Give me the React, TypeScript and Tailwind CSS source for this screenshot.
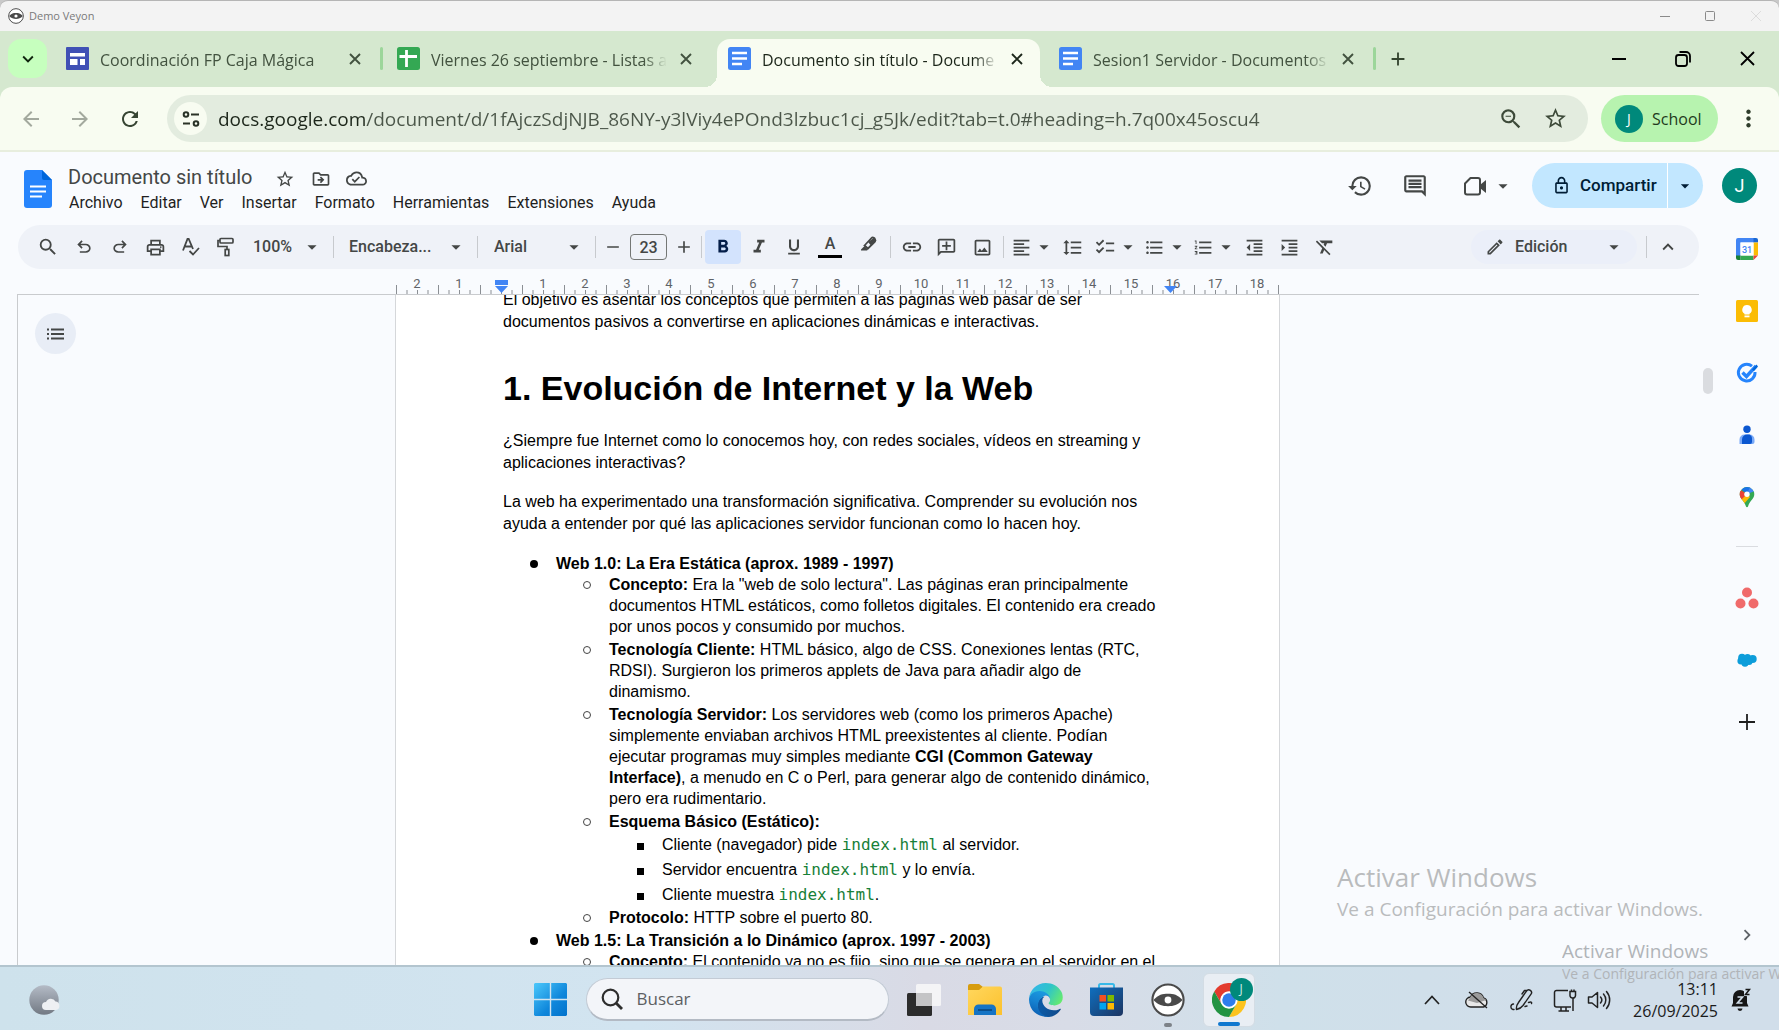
import React, { useState } from 'react'
import {
  MdAdd,
  MdArrowBack,
  MdArrowDropDown,
  MdArrowForward,
  MdChecklist,
  MdFormatAlignLeft,
  MdFormatBold,
  MdFormatClear,
  MdFormatIndentDecrease,
  MdFormatIndentIncrease,
  MdFormatItalic,
  MdFormatLineSpacing,
  MdFormatListBulleted,
  MdFormatListNumbered,
  MdFormatUnderlined,
  MdHistory,
  MdInsertLink,
  MdKeyboardArrowDown,
  MdKeyboardArrowRight,
  MdKeyboardArrowUp,
  MdMoreVert,
  MdOutlineAddComment,
  MdOutlineCloudDone,
  MdOutlineComment,
  MdOutlineDriveFileMove,
  MdOutlineEdit,
  MdOutlineImage,
  MdOutlineLock,
  MdOutlinePrint,
  MdRefresh,
  MdRemove,
  MdSearch,
  MdStarBorder,
  MdZoomOut,
} from 'react-icons/md'

/* ---------- drawings ---------- */

const VeyonEye = ({ className }: { className: string }) => (
  <svg viewBox="0 0 36 36" className={className} aria-hidden="true">
    <circle cx="18" cy="18" r="16.500" fill="#fff" stroke="#4a4a4a" strokeWidth="2.200" />
    <path d="M2.500 18C8 12.500 12 11.500 18 11.500S28 12.500 33.500 18C28 23.500 24 24.500 18 24.500S8 23.500 2.500 18z" fill="#4a4a4a" />
    <circle cx="18" cy="18" r="3.600" fill="#fff" />
  </svg>
)

const SitesIcon = () => (
  <svg viewBox="0 0 23 23" className="size-[23px]" aria-hidden="true">
    <rect width="23" height="23" rx="1" fill="#4050b5" />
    <rect x="4" y="6" width="15" height="3.500" fill="#fff" />
    <rect x="4" y="12" width="7.500" height="6" fill="#fff" />
    <rect x="14" y="12" width="5" height="6" fill="#fff" />
  </svg>
)

const SheetsIcon = () => (
  <svg viewBox="0 0 23 23" className="size-[23px]" aria-hidden="true">
    <rect width="23" height="23" rx="2.500" fill="#34a853" />
    <path d="M9.500 3v17M2.500 9.500h17.500" stroke="#fff" strokeWidth="2.800" />
  </svg>
)

const DocsTabIcon = () => (
  <svg viewBox="0 0 23 23" className="size-[23px]" aria-hidden="true">
    <rect width="23" height="23" rx="2.500" fill="#4285f4" />
    <path d="M4 6h15M4 11.500h15M4 17h10" stroke="#fff" strokeWidth="2.400" />
  </svg>
)

const DocsLogo = () => (
  <svg viewBox="0 0 28 38" className="h-[38px] w-7" aria-hidden="true">
    <path d="M3 0h15l10 10v25a3 3 0 0 1-3 3H3a3 3 0 0 1-3-3V3a3 3 0 0 1 3-3z" fill="#2684fc" />
    <path d="M18 0l10 10H20a2 2 0 0 1-2-2z" fill="#0066da" />
    <path d="M6 16.500h16M6 21.500h16M6 26.500h12" stroke="#fff" strokeWidth="2.200" />
  </svg>
)

const CloseIcon = () => (
  <svg viewBox="0 0 12 12" className="size-3" stroke="currentColor" strokeWidth="1.900" aria-hidden="true">
    <path d="M1 1l10 10M11 1L1 11" />
  </svg>
)

const SiteInfoIcon = () => (
  <svg viewBox="0 0 18 18" className="size-[18px]" fill="none" stroke="#2a3327" strokeWidth="2" aria-hidden="true">
    <circle cx="4" cy="4.500" r="2.300" />
    <path d="M9 4.500h8M1 13.500h7" />
    <circle cx="14" cy="13.500" r="2.300" />
  </svg>
)

const RestoreIcon = () => (
  <svg viewBox="0 0 16 16" className="size-4" fill="none" stroke="#000" strokeWidth="1.800" aria-hidden="true">
    <rect x="1" y="4" width="11" height="11" rx="2.500" />
    <path d="M4.500 1h6.500a4 4 0 0 1 4 4v6.500" />
  </svg>
)

const UndoIcon = () => (
  <svg viewBox="0 -960 960 960" className="size-5" fill="currentColor" aria-hidden="true">
    <path d="M280-200v-80h284q63 0 109.500-40T720-420q0-60-46.500-100T564-560H312l104 104-56 56-200-200 200-200 56 56-104 104h252q97 0 166.500 63T800-420q0 94-69.500 157T564-200H280Z" />
  </svg>
)

const RedoIcon = () => (
  <svg viewBox="0 -960 960 960" className="size-5" fill="currentColor" aria-hidden="true">
    <path d="M396-200q-97 0-166.500-63T160-420q0-94 69.500-157T396-640h252L544-744l56-56 200 200-200 200-56-56 104-104H396q-63 0-109.500 40T240-420q0 60 46.500 100T396-280h284v80H396Z" />
  </svg>
)

const SpellIcon = () => (
  <svg viewBox="0 0 20 20" className="size-5" fill="none" stroke="currentColor" strokeWidth="1.800" aria-hidden="true">
    <path d="M2 13.500L6.500 2h1.200L12 12M3.800 9.500h6.500M8.500 14l3.500 3.500L18 11" />
  </svg>
)

const PaintIcon = () => (
  <svg viewBox="0 0 20 20" className="size-5" fill="none" stroke="currentColor" strokeWidth="1.700" aria-hidden="true">
    <rect x="4" y="1.500" width="13" height="4.500" rx="1" />
    <path d="M4 3.500H2v6h9v3" />
    <rect x="9.200" y="12.500" width="3.600" height="6" />
  </svg>
)

const MarkerIcon = () => (
  <svg viewBox="0 0 20 20" className="size-5" aria-hidden="true">
    <path d="M3 14.500l3.500-3.500 3.500 3.500-1 1H3z" fill="currentColor" />
    <path d="M6.500 10.500L13.500 3a1.600 1.600 0 0 1 2.300 0l1.200 1.300a1.600 1.600 0 0 1 0 2.200L10 13.500z" fill="none" stroke="currentColor" strokeWidth="1.800" />
    <path d="M10 7l7-5 1 4-5 4.500z" fill="currentColor" />
  </svg>
)

const MeetIcon = () => (
  <svg viewBox="0 0 24 24" className="size-6" aria-hidden="true">
    <path d="M7.500 4H15a2 2 0 0 1 2 2v12.500a2 2 0 0 1-2 2H4a2 2 0 0 1-2-2V9.500z" fill="none" stroke="#444746" strokeWidth="2" strokeLinejoin="round" />
    <path d="M17.500 10.500L23 6v13l-5.500-4.500z" fill="#444746" />
  </svg>
)

const OutlineIcon = () => (
  <svg viewBox="0 0 18 14" width="18" height="14" fill="none" stroke="#444746" strokeWidth="2" aria-hidden="true">
    <path d="M0 2.500h2M4 2.500h13M0 7h2M4 7h13M0 11.500h2M4 11.500h13" />
  </svg>
)

const CalendarIcon = () => (
  <svg viewBox="0 0 22 22" className="size-[22px]" aria-hidden="true">
    <path d="M2 0h16v4.500H4.500V18H0V2a2 2 0 0 1 2-2z" fill="#4285f4" />
    <path d="M17.500 0H20a2 2 0 0 1 2 2v2.500h-4.500z" fill="#1967d2" />
    <path d="M17.500 4.500H22v13h-4.500z" fill="#fbbc04" />
    <path d="M4.500 17.500h13V22h-13z" fill="#34a853" />
    <path d="M0 17.500h4.500V22H2a2 2 0 0 1-2-2z" fill="#188038" />
    <path d="M17.500 17.500H22L17.500 22z" fill="#ea4335" />
    <path d="M4.500 4.500h13v13h-13z" fill="#fff" />
    <text x="11" y="14.500" textAnchor="middle" fontSize="9" fontWeight="500" fontFamily="Roboto, sans-serif" fill="#4285f4">31</text>
  </svg>
)

const KeepIcon = () => (
  <svg viewBox="0 0 22 22" className="size-[22px]" aria-hidden="true">
    <rect width="22" height="22" rx="1.500" fill="#fbbc04" />
    <path d="M11 5a4.700 4.700 0 0 1 2.500 8.700V14.500h-5V13.700A4.700 4.700 0 0 1 11 5z" fill="#fff" />
    <rect x="8.500" y="15.500" width="5" height="1.800" fill="#fff" />
  </svg>
)

const TasksIcon = () => (
  <svg viewBox="0 0 22 22" className="size-[22px]" aria-hidden="true">
    <path d="M16 4.200A8.300 8.300 0 1 0 19 10" fill="none" stroke="#2684fc" strokeWidth="3" />
    <path d="M6.500 10.500l4 4L20 4" fill="none" stroke="#2684fc" strokeWidth="3.400" />
    <path d="M16 7.500l4.500-5 1.500 2-4 4.500z" fill="#0066da" />
  </svg>
)

const ContactsIcon = () => (
  <svg viewBox="0 0 22 22" className="size-[22px]" aria-hidden="true">
    <circle cx="11" cy="5.300" r="3.700" fill="#0b57d0" />
    <path d="M3.500 20v-4.500a5 5 0 0 1 5-5h5a5 5 0 0 1 5 5V18a2 2 0 0 1-2 2z" fill="#7baaf7" />
    <path d="M6 20v-4.500a5 5 0 0 1 5-5h2.500a5 5 0 0 1 2.500 5V18a2 2 0 0 1-2 2z" fill="#0b57d0" />
  </svg>
)

const MapsIcon = () => (
  <svg viewBox="0 0 16 22" className="h-[22px] w-4" aria-hidden="true">
    <defs>
      <clipPath id="pin">
        <path d="M8 1a7.300 7.300 0 0 1 7.300 7.300c0 4.700-4.300 6-6.300 12.200-.3 1-1.700 1-2 0C5 14.300.7 13 .7 8.300A7.300 7.300 0 0 1 8 1z" />
      </clipPath>
    </defs>
    <g clipPath="url(#pin)">
      <rect width="16" height="22" fill="#34a853" />
      <path d="M0 13L8 8l3 3-7 8H0z" fill="#fbbc04" />
      <path d="M0 3l8 5-6 6H0z" fill="#ea4335" />
      <path d="M2 3l6 5 4-7-4-1z" fill="#1a73e8" />
      <path d="M8 8l3-7 5 4z" fill="#4285f4" />
    </g>
    <circle cx="8" cy="8.300" r="2.700" fill="#fff" />
  </svg>
)

const AsanaIcon = () => (
  <svg viewBox="0 0 24 22" className="h-[22px] w-6" fill="#f06a6a" aria-hidden="true">
    <circle cx="12" cy="5.500" r="5" />
    <circle cx="5.500" cy="16.500" r="5" />
    <circle cx="18.500" cy="16.500" r="5" />
  </svg>
)

const SalesforceIcon = () => (
  <svg viewBox="0 0 20 14" width="20" height="14" fill="#0d9dda" aria-hidden="true">
    <circle cx="5" cy="4.500" r="3.800" />
    <circle cx="10.500" cy="4.500" r="3.500" />
    <circle cx="15.700" cy="6" r="4" />
    <circle cx="3.800" cy="8" r="3.400" />
    <circle cx="8" cy="10" r="3.700" />
    <circle cx="12" cy="8.500" r="3.500" />
  </svg>
)

const WeatherIcon = () => (
  <svg viewBox="0 0 32 30" className="h-[30px] w-8" aria-hidden="true">
    <defs>
      <linearGradient id="moon" x1="0" y1="0" x2="0" y2="1">
        <stop offset="0" stopColor="#b4bbc6" />
        <stop offset="1" stopColor="#727983" />
      </linearGradient>
    </defs>
    <circle cx="15" cy="15" r="14.700" fill="url(#moon)" />
    <path d="M17 25a4 4 0 0 1 0-8 5.200 5.200 0 0 1 9.500-.5A4.300 4.300 0 0 1 27 25z" fill="#eef0f3" />
  </svg>
)

const StartIcon = () => (
  <svg viewBox="0 0 33 33" className="size-[33px]" aria-hidden="true">
    <defs>
      <linearGradient id="win" x1="0" y1="0" x2="1" y2="1">
        <stop offset="0" stopColor="#4cc8fb" />
        <stop offset="0.600" stopColor="#0f87db" />
        <stop offset="1" stopColor="#0272cb" />
      </linearGradient>
    </defs>
    <path d="M1 0h14.800v15.800H0V1zM17.200 0H32l1 1v14.800H17.200zM0 17.200h15.800V33H1l-1-1zM17.200 17.200H33V32l-1 1H17.200z" fill="url(#win)" />
  </svg>
)

const TaskViewIcon = () => (
  <svg viewBox="0 0 34 32" className="h-8 w-[34px]" aria-hidden="true">
    <rect x="0" y="9" width="25" height="23" rx="1.500" fill="#2c2c2c" />
    <rect x="9" y="0" width="25" height="22" rx="1.500" fill="#f4f4f6" />
    <rect x="9" y="9" width="16" height="13" fill="#c4c4c6" />
  </svg>
)

const FolderIcon = () => (
  <svg viewBox="0 0 34 31" className="h-[31px] w-[34px]" aria-hidden="true">
    <defs>
      <linearGradient id="fold" x1="0" y1="0" x2="1" y2="1">
        <stop offset="0" stopColor="#ffd75e" />
        <stop offset="1" stopColor="#fcc12d" />
      </linearGradient>
    </defs>
    <path d="M0 2a2 2 0 0 1 2-2h9l4 3-3 4H0z" fill="#d79c0e" />
    <path d="M0 6h11l4-3.500h17a2 2 0 0 1 2 2V31H0z" fill="url(#fold)" />
    <path d="M6 31v-6a4.500 4.500 0 0 1 4.500-4.500h13A4.500 4.500 0 0 1 28 25v6z" fill="#1674c4" />
    <path d="M10 26h14" stroke="#0b4f8c" strokeWidth="2" />
  </svg>
)

const EdgeIcon = () => (
  <svg viewBox="0 0 258 258" className="size-[34px]" aria-hidden="true">
    <defs>
      <linearGradient id="e1" x1="0.200" y1="0.500" x2="1" y2="0.700">
        <stop offset="0" stopColor="#0c59a4" />
        <stop offset="1" stopColor="#114a8b" />
      </linearGradient>
      <linearGradient id="e2" x1="0.600" y1="0" x2="0.300" y2="1">
        <stop offset="0" stopColor="#1b9de2" />
        <stop offset="0.500" stopColor="#1581d0" />
        <stop offset="1" stopColor="#0a5cb0" />
      </linearGradient>
      <linearGradient id="e3" x1="0" y1="0.300" x2="1" y2="0.700">
        <stop offset="0" stopColor="#35b6ea" />
        <stop offset="0.500" stopColor="#2fc4c9" />
        <stop offset="1" stopColor="#66eb6e" />
      </linearGradient>
    </defs>
    <path d="M235.680 195.460a93.730 93.730 0 0 1-10.540 4.710 101.870 101.870 0 0 1-35.900 6.460c-47.320 0-88.540-32.550-88.540-74.320A31.480 31.480 0 0 1 117.130 104.400c-42.800 1.800-53.800 46.400-53.800 72.530 0 73.880 68.090 81.370 82.760 81.370 7.910 0 19.840-2.300 27-4.560l1.310-.44a128.340 128.340 0 0 0 66.600-52.800 4 4 0 0 0-5.320-5.040z" fill="url(#e1)" />
    <path d="M105.730 241.420A79.200 79.200 0 0 1 83 220.080a80.720 80.720 0 0 1 29.520-120.370c3.120-1.470 8.450-4.130 15.540-4a32.350 32.350 0 0 1 25.690 13 31.880 31.880 0 0 1 6.360 18.660c0-.21 24.460-79.600-80-79.600-43.900 0-80 41.660-80 78.210a130.150 130.150 0 0 0 12.110 56 128 128 0 0 0 156.380 67.110 75.550 75.550 0 0 1-62.780-8z" fill="url(#e2)" />
    <path d="M152.330 148.860c-.81 1.050-3.300 2.500-3.300 5.660 0 2.610 1.700 5.120 4.720 7.230 14.380 10 41.490 8.680 41.560 8.680a59.560 59.560 0 0 0 30.270-8.350 61.380 61.380 0 0 0 30.430-52.880c.26-22.410-8-37.310-11.340-43.910C223.460 23.780 177.720 0 128 0A128 128 0 0 0 0 126.200c.48-36.540 36.800-66.050 80-66.050 3.500 0 23.460.34 42 10.070 16.340 8.580 24.900 18.940 30.850 29.210 6.180 10.670 7.280 24.150 7.280 29.520s-2.740 13.330-7.800 19.910z" fill="url(#e3)" />
  </svg>
)

const StoreIcon = () => (
  <svg viewBox="0 0 33 33" className="size-[33px]" aria-hidden="true">
    <defs>
      <linearGradient id="store" x1="0" y1="0" x2="1" y2="1">
        <stop offset="0" stopColor="#0f6fbf" />
        <stop offset="1" stopColor="#1d3561" />
      </linearGradient>
    </defs>
    <path d="M9 6V2.500A1.500 1.500 0 0 1 10.500 1h12A1.500 1.500 0 0 1 24 2.500V6" fill="none" stroke="#38b9e8" strokeWidth="2" />
    <path d="M0 4.500h33V29a4 4 0 0 1-4 4H4a4 4 0 0 1-4-4z" fill="url(#store)" />
    <path d="M9.500 12h6.500v6.500H9.500z" fill="#f25022" />
    <path d="M17.500 12H24v6.500h-6.500z" fill="#7fba00" />
    <path d="M9.500 20h6.500v6.500H9.500z" fill="#00a4ef" />
    <path d="M17.500 20H24v6.500h-6.500z" fill="#ffb900" />
  </svg>
)

const ChromeIcon = () => (
  <svg viewBox="0 0 48 48" className="size-[34px]" aria-hidden="true">
    <path d="M24 12H44.800A24 24 0 0 0 3.200 12L13.600 30A12 12 0 0 1 24 12Z" fill="#e33b2e" />
    <path d="M24 12h20.800A24 24 0 0 1 24 48L34.400 30A12 12 0 0 0 24 12Z" fill="#fcc31e" />
    <path d="M13.600 30L3.200 12A24 24 0 0 0 24 48L34.400 30A12 12 0 0 1 13.600 30Z" fill="#229342" />
    <circle cx="24" cy="24" r="12" fill="#fff" />
    <circle cx="24" cy="24" r="9.500" fill="#2f7ded" />
  </svg>
)

const CloudOffIcon = () => (
  <svg viewBox="0 0 24 18" className="h-[18px] w-6" aria-hidden="true">
    <path d="M6 16a5 5 0 0 1-.5-10A7 7 0 0 1 18.500 7 4.700 4.700 0 0 1 18.500 16z" fill="#e8e8e8" stroke="#222" strokeWidth="1.400" />
    <path d="M3 9.500L5.500 6A7 7 0 0 1 18.500 7l3 2L12 12z" fill="#9b9b9b" />
    <path d="M4 1l18 16" stroke="#222" strokeWidth="1.400" />
  </svg>
)

const PenIcon = () => (
  <svg viewBox="0 0 24 24" className="size-6" fill="none" stroke="#222" strokeWidth="1.400" strokeLinecap="round" strokeLinejoin="round" aria-hidden="true">
    <path d="M7.500 21.500c-.5-3 .5-5 2-7L17.500 3a2.700 2.700 0 0 1 4.500 3.200L14 17.500c-1.500 2-3.500 3.500-6.500 4z" />
    <path d="M13 6l2.500-3.500h2M4.500 16a2.800 2.800 0 0 0-.5 5.500h1M16 18.500l2-.5M19.500 14.500c2.500-1 3.500-.5 3 1" />
  </svg>
)

const NetworkIcon = () => (
  <svg viewBox="0 0 24 24" className="size-6" fill="none" stroke="#222" strokeWidth="1.500" aria-hidden="true">
    <path d="M15 2.500H3.500a2 2 0 0 0-2 2V17a2 2 0 0 0 2 2H18M8 19v3.500M13 19v3.500M5.500 23H16" />
    <path d="M17 3.500h5.500v4a2.500 2.500 0 0 1-2.700 2.500 2.500 2.500 0 0 1-2.800-2.500zM18.500 3.500V1.500M21 3.500V1.500M20 10v13" />
  </svg>
)

const SpeakerIcon = () => (
  <svg viewBox="0 0 24 24" className="size-6" fill="none" stroke="#222" strokeWidth="1.500" strokeLinejoin="round" strokeLinecap="round" aria-hidden="true">
    <path d="M1.500 9H5l5.500-4.500v15L5 15H1.500z" />
    <path d="M13.500 9a4.500 4.500 0 0 1 0 6M16.500 6a9 9 0 0 1 0 12M19.500 3.500a13 13 0 0 1 0 17" />
  </svg>
)

const BellIcon = () => (
  <svg viewBox="0 0 20 24" className="h-6 w-5" aria-hidden="true">
    <path d="M9 2a7 7 0 0 0-7 7v6L.5 18.500h17L16 15V9a7 7 0 0 0-7-7z" fill="#161616" />
    <path d="M6.500 20.500h5a2.500 2.500 0 0 1-5 0z" fill="#161616" />
    <path d="M13 0h7v8h-7z" fill="#d1deea" />
    <path d="M14.500 1.500h4l-4 5h4" fill="none" stroke="#161616" strokeWidth="1.500" />
    <path d="M6.500 9h5l-5 6h5" fill="none" stroke="#d1deea" strokeWidth="1.700" />
  </svg>
)

/* ---------- browser chrome ---------- */

function TitleBar() {
  return (
    <div className="flex h-[31px] shrink-0 items-center rounded-t-lg border-t border-[#b5b5b5] bg-[#f3f3f3] pl-2">
      <VeyonEye className="size-4" />
      <span className="ml-[5px] grow text-[11px] leading-4 text-[#7a7a7a]">Demo Veyon</span>
      <button aria-label="Minimizar" className="flex w-[45px] justify-center">
        <svg viewBox="0 0 10 10" className="size-2.5" stroke="#8a8a8a" aria-hidden="true"><path d="M0 5.500h10" /></svg>
      </button>
      <button aria-label="Maximizar" className="flex w-[45px] justify-center">
        <svg viewBox="0 0 10 10" className="size-2.5" fill="none" stroke="#8a8a8a" aria-hidden="true"><rect x="0.500" y="0.500" width="9" height="9" rx="1" /></svg>
      </button>
      <button aria-label="Cerrar" className="flex w-[47px] justify-center">
        <svg viewBox="0 0 10 10" className="size-2.5" stroke="#dcdcdc" aria-hidden="true"><path d="M0 0l10 10M10 0L0 10" /></svg>
      </button>
    </div>
  )
}

const TABS = [
  { title: 'Coordinación FP Caja Mágica', icon: <SitesIcon /> },
  { title: 'Viernes 26 septiembre - Listas a', icon: <SheetsIcon /> },
  { title: 'Documento sin título - Docume', icon: <DocsTabIcon />, active: true },
  { title: 'Sesion1 Servidor - Documentos', icon: <DocsTabIcon /> },
]

function TabStrip() {
  return (
    <div className="flex h-14 shrink-0 bg-[#d5e8cf] pt-2">
      <button aria-label="Buscar pestañas" className="ml-2 flex size-[39px] shrink-0 items-center justify-center rounded-[13px] bg-[#c6ffbe]">
        <MdKeyboardArrowDown className="size-[22px] text-[#10250f]" />
      </button>
      <div className="ml-2 flex min-w-0">
        {TABS.map((t, i) => {
          const next = TABS[i + 1]
          const divider = !t.active && !next?.active
          return (
            <React.Fragment key={t.title}>
              <div
                className={
                  t.active
                    ? 'relative flex h-12 w-[323px] min-w-0 items-start rounded-t-[13px] bg-[#f8fcf1] pt-2 pl-[11px] text-[#1c261a]'
                    : 'flex h-12 w-[323px] min-w-0 items-start pt-2 pl-[11px] text-[#42523f]'
                }
              >
                {t.active && (
                  <>
                    <span className="absolute bottom-0 -left-3 size-3 bg-[radial-gradient(circle_at_0_0,transparent_12px,#f8fcf1_12px)]" />
                    <span className="absolute -right-3 bottom-0 size-3 bg-[radial-gradient(circle_at_100%_0,transparent_12px,#f8fcf1_12px)]" />
                  </>
                )}
                <span className="shrink-0">{t.icon}</span>
                <span className="ml-[11px] w-[236px] overflow-hidden text-base leading-[27px] whitespace-nowrap [mask-image:linear-gradient(90deg,#000_90%,transparent)]">
                  {t.title}
                </span>
                <button aria-label={'Cerrar ' + t.title} className="ml-[7px] flex h-[23px] w-6 shrink-0 items-center justify-center">
                  <CloseIcon />
                </button>
              </div>
              <span className={divider ? 'mt-2 mr-[3px] ml-[2px] h-[23px] w-[3px] shrink-0 rounded-full bg-[#9cd69a]' : 'w-2 shrink-0'} />
            </React.Fragment>
          )
        })}
        <button aria-label="Nueva pestaña" className="ml-[7px] flex h-[39px] w-6 shrink-0 items-center justify-center">
          <MdAdd className="size-[22px] text-[#33442f]" />
        </button>
      </div>
      <div className="ml-auto flex h-[39px] items-center">
        <button aria-label="Minimizar ventana" className="flex w-16 justify-center">
          <span className="h-[2px] w-3.5 bg-black" />
        </button>
        <button aria-label="Restaurar ventana" className="flex w-16 justify-center"><RestoreIcon /></button>
        <button aria-label="Cerrar ventana" className="flex w-16 justify-center">
          <svg viewBox="0 0 15 15" className="size-[15px]" stroke="#000" strokeWidth="1.800" aria-hidden="true"><path d="M1 1l13 13M14 1L1 14" /></svg>
        </button>
      </div>
    </div>
  )
}

function AddressBar() {
  return (
    <div className="shrink-0 bg-[#d5e8cf]">
      <div className="flex h-[65px] items-center rounded-t-xl border-b-2 border-[#e8eede] bg-[#f8fcf1] pl-[6px]">
        <button aria-label="Atrás" className="flex w-[49px] justify-center"><MdArrowBack className="size-6 text-[#a3a99e]" /></button>
        <button aria-label="Adelante" className="flex w-[50px] justify-center"><MdArrowForward className="size-6 text-[#a3a99e]" /></button>
        <button aria-label="Volver a cargar" className="flex w-[50px] justify-center"><MdRefresh className="size-6 text-[#374533]" /></button>
        <div className="ml-3 flex h-[47px] grow items-center rounded-full bg-[#e3ecdf] pr-[21px] pl-[7px]">
          <button aria-label="Información del sitio" className="flex size-[33px] shrink-0 items-center justify-center rounded-full bg-[#f8fcf1]">
            <SiteInfoIcon />
          </button>
          <input
            aria-label="Barra de direcciones"
            defaultValue="docs.google.com/document/d/1fAjczSdjNJB_86NY-y3lViy4ePOnd3lzbuc1cj_g5Jk/edit?tab=t.0#heading=h.7q00x45oscu4"
            className="ml-[11px] min-w-0 grow bg-[linear-gradient(90deg,#1c261a_148px,#4b5649_148px)] bg-clip-text text-[19px] leading-7 text-transparent outline-none"
          />
          <button aria-label="Zoom" className="flex w-[45px] justify-center"><MdZoomOut className="size-[26px] text-[#3d4a39]" /></button>
          <button aria-label="Añadir a marcadores" className="ml-2.5 flex w-6 justify-center"><MdStarBorder className="size-[25px] shrink-0 text-[#3d4a39]" /></button>
        </div>
        <button className="ml-[13px] flex h-[47px] w-[117px] items-center rounded-full bg-[#b7f3af] pl-3.5 text-base text-[#1f3a1c]">
          <span className="flex size-7 items-center justify-center rounded-full bg-[#00897b] text-sm text-white">J</span>
          <span className="ml-[9px]">School</span>
        </button>
        <button aria-label="Más opciones" className="mr-[17px] ml-[17px] flex w-[27px] justify-center"><MdMoreVert className="size-[27px] shrink-0 text-[#2f3d2b]" /></button>
      </div>
    </div>
  )
}

/* ---------- Docs header and toolbar ---------- */

const MENUS = ['Archivo', 'Editar', 'Ver', 'Insertar', 'Formato', 'Herramientas', 'Extensiones', 'Ayuda']

function DocsHeader() {
  return (
    <header className="flex h-[73px] shrink-0 items-start pr-[22px] pl-6 font-['Roboto',sans-serif]">
      <a href="#inicio" aria-label="Página principal de Documentos" className="mt-[18px] shrink-0"><DocsLogo /></a>
      <div className="mt-3 ml-2">
        <div className="flex h-[26px] items-center text-[#444746]">
          <input aria-label="Título del documento" defaultValue="Documento sin título" className="ml-2 w-[205px] bg-transparent text-xl leading-[26px] text-[#444746] outline-none" />
          <button aria-label="Destacar" className="mt-[3px] flex w-6 justify-center"><MdStarBorder className="size-5" /></button>
          <button aria-label="Mover" className="mt-[3px] ml-3 flex w-6 justify-center"><MdOutlineDriveFileMove className="size-5" /></button>
          <button aria-label="Estado del documento" className="mt-[3px] ml-[11px] flex w-6 justify-center"><MdOutlineCloudDone className="size-[21px]" /></button>
        </div>
        <nav className="flex h-[26px] items-center gap-[18px] pl-[9px] text-base text-[#1f1f1f]">
          {MENUS.map((m) => (
            <button key={m}>{m}</button>
          ))}
        </nav>
      </div>
      <div className="mt-[11px] ml-auto flex h-[45px] items-center text-[#444746]">
        <button aria-label="Historial de versiones"><MdHistory className="size-[26px]" /></button>
        <button aria-label="Comentarios" className="ml-[29px]"><MdOutlineComment className="size-[26px]" /></button>
        <button aria-label="Videollamada" className="ml-[35px] flex items-center">
          <MeetIcon />
          <MdArrowDropDown className="ml-[5px] size-[22px]" />
        </button>
        <div className="ml-[18px] flex h-[45px] overflow-hidden rounded-full bg-[#c2e7ff] text-[#001d35]">
          <button className="flex w-[135px] items-center pl-5 text-[17px] font-medium">
            <MdOutlineLock className="size-[19px]" />
            <span className="ml-[9px]">Compartir</span>
          </button>
          <button aria-label="Opciones de compartir" className="flex w-9 items-center justify-center border-l border-white pr-0.5"><MdArrowDropDown className="size-5" /></button>
        </div>
        <button aria-label="Cuenta" className="ml-[19px] flex size-[35px] items-center justify-center rounded-full bg-[#00897b] text-lg text-white">J</button>
      </div>
    </header>
  )
}

const Sep = () => <span className="mx-[3px] h-[22px] w-px shrink-0 bg-[#c7cace]" />

function Cell({ label, wide, children }: { label: string; wide?: boolean; children: React.ReactNode }) {
  return (
    <button aria-label={label} className={wide ? 'flex h-[34px] w-9 shrink-0 items-center justify-center' : 'flex h-[34px] w-[35px] shrink-0 items-center justify-center'}>
      {children}
    </button>
  )
}

function SplitCell({ label, children }: { label: string; children: React.ReactNode }) {
  return (
    <button aria-label={label} className="flex h-[34px] w-[49px] shrink-0 items-center">
      <span className="flex w-9 justify-center">{children}</span>
      <MdArrowDropDown className="-ml-[3px] size-[22px] shrink-0" />
    </button>
  )
}

function Dropdown({ label, value, box, pad }: { label: string; value: string; box: string; pad: string }) {
  return (
    <label className={'relative flex h-[34px] shrink-0 items-center ' + box}>
      <span className="sr-only">{label}</span>
      <select className={'w-full appearance-none bg-transparent text-base leading-6 font-medium text-[#444746] outline-none ' + pad}>
        <option>{value}</option>
      </select>
      <MdArrowDropDown className="pointer-events-none absolute right-[7px] size-[22px]" />
    </label>
  )
}

function Toolbar() {
  const [size, setSize] = useState('23')
  return (
    <div className="mr-4 flex h-11 shrink-0 items-center overflow-hidden rounded-full bg-[#eff2f8] pr-[19px] pl-3 font-['Roboto',sans-serif] text-[#444746]">
      <Cell wide label="Buscar en los menús"><MdSearch className="size-[22px]" /></Cell>
      <Cell wide label="Deshacer"><UndoIcon /></Cell>
      <Cell wide label="Rehacer"><RedoIcon /></Cell>
      <Cell label="Imprimir"><MdOutlinePrint className="size-[21px]" /></Cell>
      <Cell label="Revisión ortográfica"><SpellIcon /></Cell>
      <Cell label="Copiar formato"><PaintIcon /></Cell>
      <Dropdown label="Zoom" value="100%" box="w-[87px]" pad="pl-[10px]" />
      <Sep />
      <Dropdown label="Estilos" value="Encabeza..." box="w-[137px]" pad="pl-3" />
      <Sep />
      <Dropdown label="Fuente" value="Arial" box="w-[111px]" pad="pl-[13px]" />
      <Sep />
      <button aria-label="Reducir tamaño" className="flex w-7 shrink-0 justify-center"><MdRemove className="size-5" /></button>
      <input aria-label="Tamaño de fuente" value={size} onChange={(e) => setSize(e.target.value)} className="mx-[3px] h-[26px] w-[37px] shrink-0 rounded border border-[#747775] text-center text-base font-medium outline-none" />
      <button aria-label="Aumentar tamaño" className="flex w-7 shrink-0 justify-center"><MdAdd className="size-5" /></button>
      <Sep />
      <button aria-label="Negrita" aria-pressed="true" className="flex h-[34px] w-9 shrink-0 items-center justify-center rounded bg-[#d3e3fd] text-[#041e49]"><MdFormatBold className="size-[22px]" /></button>
      <Cell label="Cursiva"><MdFormatItalic className="size-[22px]" /></Cell>
      <Cell wide label="Subrayado"><MdFormatUnderlined className="size-5" /></Cell>
      <button aria-label="Color del texto" className="flex h-[34px] w-9 shrink-0 flex-col items-center text-base leading-5 font-medium">
        <span className="mt-1">A</span>
        <span className="mt-px h-[3px] w-6 bg-black" />
      </button>
      <button aria-label="Color de resaltado" className="flex w-[39px] shrink-0 justify-center pb-1"><MarkerIcon /></button>
      <Sep />
      <Cell label="Insertar enlace"><MdInsertLink className="size-[22px]" /></Cell>
      <Cell label="Añadir comentario"><MdOutlineAddComment className="size-[21px] -scale-x-100" /></Cell>
      <Cell wide label="Insertar imagen"><MdOutlineImage className="size-[21px]" /></Cell>
      <Sep />
      <button aria-label="Alinear" className="flex h-[34px] w-12 shrink-0 items-center">
        <span className="flex w-8 justify-center"><MdFormatAlignLeft className="size-[21px]" /></span>
        <MdArrowDropDown className="-ml-[3px] size-[22px] shrink-0" />
      </button>
      <Cell label="Interlineado"><MdFormatLineSpacing className="size-[21px]" /></Cell>
      <SplitCell label="Lista de comprobación"><MdChecklist className="size-[22px]" /></SplitCell>
      <SplitCell label="Lista con viñetas"><MdFormatListBulleted className="size-[21px]" /></SplitCell>
      <SplitCell label="Lista numerada"><MdFormatListNumbered className="size-[21px]" /></SplitCell>
      <Cell label="Reducir sangría"><MdFormatIndentDecrease className="size-[21px]" /></Cell>
      <Cell label="Aumentar sangría"><MdFormatIndentIncrease className="size-[21px]" /></Cell>
      <Cell label="Borrar formato"><MdFormatClear className="size-[22px]" /></Cell>
      <label className="relative ml-auto flex h-[34px] w-[166px] shrink-0 items-center rounded-full bg-[#ebeff9]">
        <span className="sr-only">Modo</span>
        <MdOutlineEdit className="pointer-events-none absolute left-3.5 size-5" />
        <select className="w-full appearance-none bg-transparent pl-11 text-base leading-6 font-medium text-[#444746] outline-none">
          <option>Edición</option>
        </select>
        <MdArrowDropDown className="pointer-events-none absolute right-3 size-[22px]" />
      </label>
      <span className="mx-[9px] h-[22px] w-px shrink-0 bg-[#c7cace]" />
      <button aria-label="Ocultar los menús" className="flex w-6 shrink-0 justify-center"><MdKeyboardArrowUp className="size-[22px]" /></button>
    </div>
  )
}

/* ---------- ruler and page ---------- */

function Ruler() {
  const quarters = Array.from({ length: 85 }, (_, i) => i)
  const labels = [-2, -1, ...Array.from({ length: 18 }, (_, i) => i + 1)]
  return (
    <svg viewBox="0 0 884 25" width="884" height="25" className="shrink-0" aria-hidden="true">
      {quarters.map((i) => (
        <path key={i} d={'M' + (0.5 + i * 10.5) + ' ' + (i % 4 === 0 ? 16 : 21) + 'V25'} stroke="#8b8f94" />
      ))}
      {labels.map((n) => (
        <text key={n} x={105 + n * 42} y="19" textAnchor="middle" fontSize="13" fontFamily="Roboto, sans-serif" fill="#5f6368">
          {Math.abs(n)}
        </text>
      ))}
      <path d="M99 11h13v5H99zM99 17h13l-6.500 7z" fill="#4285f4" />
      <path d="M768 17h13l-6.500 7z" fill="#4285f4" />
    </svg>
  )
}

function Item({ marker, children, sub, tall }: { marker: string; children: React.ReactNode; sub?: React.ReactNode; tall?: boolean }) {
  return (
    <li>
      <div className={tall ? 'flex leading-[25px]' : sub ? 'flex leading-[21px]' : 'flex pb-0.5 leading-[21px]'}>
        {marker === 'disc' && <span className="mt-[7px] mr-[18px] ml-[27px] size-2 shrink-0 rounded-full bg-black" />}
        {marker === 'ring' && <span className="mt-[7px] mr-[18px] ml-[27px] size-2 shrink-0 rounded-full border border-[#444]" />}
        {marker === 'square' && <span className="mt-[11px] mr-[18px] ml-[28px] size-[7px] shrink-0 bg-black" />}
        <div className="whitespace-nowrap">{children}</div>
      </div>
      {sub && <ul className="pl-[53px]">{sub}</ul>}
    </li>
  )
}

const Code = ({ children }: { children: React.ReactNode }) => (
  <code className="font-['DejaVu_Sans_Mono',monospace] leading-none text-[#188038]">{children}</code>
)

function Page() {
  return (
    <article className="w-[885px] shrink-0 overflow-hidden border-x border-[#d5d7da] bg-white pl-[107px] font-['Liberation_Sans',Arial,sans-serif] text-base text-black">
      <p className="-mt-1.5 leading-[22px]">
        El objetivo es asentar los conceptos que permiten a las páginas web pasar de ser<br />
        documentos pasivos a convertirse en aplicaciones dinámicas e interactivas.
      </p>
      <h1 className="mt-[35px] text-[34px] leading-10 font-bold">1. Evolución de Internet y la Web</h1>
      <p className="mt-[22px] leading-[22px]">
        ¿Siempre fue Internet como lo conocemos hoy, con redes sociales, vídeos en streaming y<br />
        aplicaciones interactivas?
      </p>
      <p className="mt-[17px] leading-[22px]">
        La web ha experimentado una transformación significativa. Comprender su evolución nos<br />
        ayuda a entender por qué las aplicaciones servidor funcionan como lo hacen hoy.
      </p>
      <ul className="mt-[18px]">
        <Item
          marker="disc"
          sub={
            <>
              <Item marker="ring">
                <b>Concepto:</b> Era la "web de solo lectura". Las páginas eran principalmente<br />
                documentos HTML estáticos, como folletos digitales. El contenido era creado<br />
                por unos pocos y consumido por muchos.
              </Item>
              <Item marker="ring">
                <b>Tecnología Cliente:</b> HTML básico, algo de CSS. Conexiones lentas (RTC,<br />
                RDSI). Surgieron los primeros applets de Java para añadir algo de<br />
                dinamismo.
              </Item>
              <Item marker="ring">
                <b>Tecnología Servidor:</b> Los servidores web (como los primeros Apache)<br />
                simplemente enviaban archivos HTML preexistentes al cliente. Podían<br />
                ejecutar programas muy simples mediante <b>CGI (Common Gateway<br />
                Interface)</b>, a menudo en C o Perl, para generar algo de contenido dinámico,<br />
                pero era rudimentario.
              </Item>
              <Item
                marker="ring"
                sub={
                  <>
                    <Item tall marker="square">Cliente (navegador) pide <Code>index.html</Code> al servidor.</Item>
                    <Item tall marker="square">Servidor encuentra <Code>index.html</Code> y lo envía.</Item>
                    <Item tall marker="square">Cliente muestra <Code>index.html</Code>.</Item>
                  </>
                }
              >
                <b>Esquema Básico (Estático):</b>
              </Item>
              <Item marker="ring"><b>Protocolo:</b> HTTP sobre el puerto 80.</Item>
            </>
          }
        >
          <b>Web 1.0: La Era Estática (aprox. 1989 - 1997)</b>
        </Item>
        <Item
          marker="disc"
          sub={
            <Item marker="ring">
              <b>Concepto:</b> El contenido ya no es fijo, sino que se genera en el servidor en el
            </Item>
          }
        >
          <b>Web 1.5: La Transición a lo Dinámico (aprox. 1997 - 2003)</b>
        </Item>
      </ul>
    </article>
  )
}

function SidePanel() {
  return (
    <aside className="flex w-16 shrink-0 flex-col items-center pt-[13px]">
      <div className="flex flex-col items-center gap-10">
        <button aria-label="Calendar"><CalendarIcon /></button>
        <button aria-label="Keep"><KeepIcon /></button>
        <button aria-label="Tasks"><TasksIcon /></button>
        <button aria-label="Contactos"><ContactsIcon /></button>
        <button aria-label="Maps"><MapsIcon /></button>
      </div>
      <span className="mt-[38px] h-px w-[22px] bg-[#dadce0]" />
      <div className="mt-10 flex flex-col items-center">
        <button aria-label="Asana" className="flex h-[22px] items-center"><AsanaIcon /></button>
        <button aria-label="Salesforce" className="mt-10 flex h-[22px] items-center"><SalesforceIcon /></button>
        <button aria-label="Obtener complementos" className="mt-10 flex h-[22px] items-center">
          <svg viewBox="0 0 16 16" className="size-4" stroke="#1f1f1f" strokeWidth="1.800" aria-hidden="true"><path d="M8 0v16M0 8h16" /></svg>
        </button>
      </div>
      <button aria-label="Ocultar panel lateral" className="mt-auto mb-[19px]"><MdKeyboardArrowRight className="size-[22px] text-[#5f6368]" /></button>
    </aside>
  )
}

/* ---------- taskbar ---------- */

function Taskbar() {
  const app = 'flex h-[54px] w-[52px] shrink-0 items-center justify-center'
  return (
    <footer className="grid h-[65px] shrink-0 grid-cols-[1fr_auto_1fr] items-center border-t-2 border-[#b3c5cf] bg-[linear-gradient(90deg,#cee2ec_0%,#d2e4f0_36%,#d9dae5_52%,#d8dce7_60%,#cfe0ea_72%,#d1deea_88%,#d1deea_100%)] pt-0.5">
      <button aria-label="Tiempo" className="ml-[29px] w-8"><WeatherIcon /></button>
      <div className="flex items-center gap-[9px]">
        <button aria-label="Inicio" className={app}><StartIcon /></button>
        <label className="flex h-[43px] w-[303px] items-center rounded-full border border-b-2 border-[#c3cbd5] border-b-[#b3bac4] bg-[#f3f5f9] pl-3.5">
          <svg viewBox="0 0 22 22" className="size-[22px] shrink-0" fill="none" aria-hidden="true">
            <circle cx="9.500" cy="9.500" r="7.800" stroke="#2d2d2d" strokeWidth="2.200" />
            <path d="M15 15l6 6" stroke="#2d2d2d" strokeWidth="2.800" />
          </svg>
          <input aria-label="Buscar" placeholder="Buscar" className="ml-[14px] w-full min-w-0 bg-transparent pr-4 text-[17px] placeholder:text-[#5c5f63] outline-none" />
        </label>
        <button aria-label="Vista de tareas" className={app}><TaskViewIcon /></button>
        <button aria-label="Explorador de archivos" className={app}><FolderIcon /></button>
        <button aria-label="Edge" className={app}><EdgeIcon /></button>
        <button aria-label="Microsoft Store" className={app}><StoreIcon /></button>
        <button aria-label="Veyon" className={'relative ' + app}>
          <VeyonEye className="size-[34px]" />
          <span className="absolute bottom-0 h-1 w-2 rounded-full bg-[#7d8288]" />
        </button>
        <button aria-label="Chrome" className={'relative rounded-md border border-[#d3dce4] bg-[#e9eef4] ' + app}>
          <ChromeIcon />
          <span className="absolute top-1 right-px flex size-[23px] items-center justify-center rounded-full bg-[#00897b] text-xs text-[#cfeae6]">J</span>
          <span className="absolute bottom-0 h-1 w-[22px] rounded-full bg-[#0f78cf]" />
        </button>
      </div>
      <div className="flex items-center justify-end pr-[28px] text-[#1b1b1b]">
        <button aria-label="Mostrar iconos ocultos" className="mr-[25px]">
          <svg viewBox="0 0 16 10" className="h-2.5 w-4" fill="none" stroke="#222" strokeWidth="1.700" aria-hidden="true"><path d="M1 9l7-7.500L15 9" /></svg>
        </button>
        <button aria-label="OneDrive" className="mr-5"><CloudOffIcon /></button>
        <button aria-label="Lápiz" className="mr-5"><PenIcon /></button>
        <button aria-label="Red" className="mr-[10px]"><NetworkIcon /></button>
        <button aria-label="Volumen" className="mr-[22px]"><SpeakerIcon /></button>
        <button className="mr-[13px] flex flex-col items-end text-base leading-[22px]">
          <span>13:11</span>
          <span>26/09/2025</span>
        </button>
        <button aria-label="Notificaciones"><BellIcon /></button>
      </div>
    </footer>
  )
}

export default function App() {
  return (
    <div className="relative flex h-screen flex-col overflow-hidden bg-[#c9c9c9] font-['Open_Sans',sans-serif]">
      <TitleBar />
      <TabStrip />
      <AddressBar />
      <div className="flex min-h-0 grow flex-col bg-[#f9fbfe]">
        <DocsHeader />
        <div className="flex min-h-0 grow">
          <main className="flex min-w-0 grow flex-col pl-[18px]">
            <Toolbar />
            <div className="mr-4 flex h-[25px] shrink-0 justify-center pr-[42px]">
              <Ruler />
            </div>
            <div className="-ml-px flex min-h-0 grow">
              <div className="relative flex min-w-0 grow justify-center overflow-hidden border-t border-l border-[#c9cbce] pr-[42px]">
                <button aria-label="Mostrar esquema" className="absolute top-[18px] left-[17px] flex size-[41px] items-center justify-center rounded-full bg-[#e8edf6]">
                  <OutlineIcon />
                </button>
                <Page />
              </div>
              <div className="w-4 shrink-0 pt-[74px] pl-1">
                <div className="h-[26px] w-2.5 rounded-full bg-[#dadce0]" />
              </div>
            </div>
          </main>
          <SidePanel />
        </div>
      </div>
      <Taskbar />
      <div className="pointer-events-none absolute right-[71px] bottom-[107px] w-[371px] whitespace-nowrap text-[#b9bbbd]">
        <p className="text-[26px] leading-9">Activar Windows</p>
        <p className="text-[19px] leading-7">Ve a Configuración para activar Windows.</p>
      </div>
      <div className="pointer-events-none absolute right-0 bottom-[46px] w-[217px] overflow-hidden whitespace-nowrap text-[#b0b4b8]">
        <p className="text-[19px] leading-[26px]">Activar Windows</p>
        <p className="text-sm leading-5">Ve a Configuración para activar Windows.</p>
      </div>
    </div>
  )
}
